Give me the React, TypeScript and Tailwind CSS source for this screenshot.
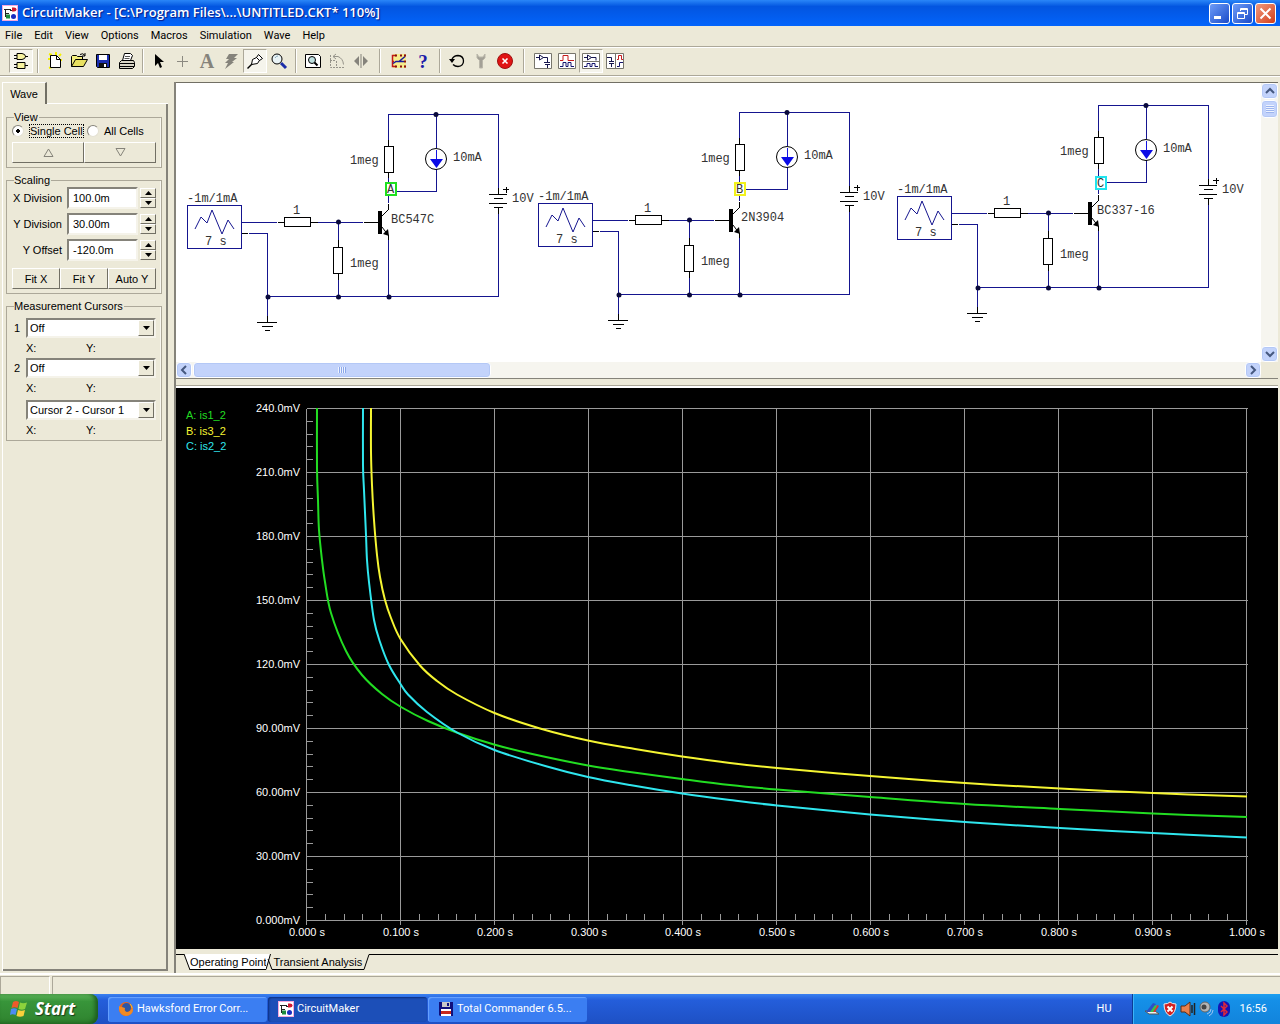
import { useState } from 'react';
import type { ReactNode } from 'react';

const MENUS = ['File', 'Edit', 'View', 'Options', 'Macros', 'Simulation', 'Wave', 'Help'];

const RAISED = 'bg-[#ece9d8] border border-t-white border-l-white border-r-[#716f64] border-b-[#716f64]';
const SUNKEN = 'bg-white border-2 border-t-[#85837a] border-l-[#85837a] border-r-[#f5f3ea] border-b-[#f5f3ea]';
const SCROLL_BTN = 'flex items-center justify-center bg-[#c3d3fb] border border-white rounded-sm shadow-[inset_0_0_0_1px_#b4c8f6]';

/* ── Toolbar icons ── */

function Icon({ children }: { children: ReactNode }) {
  return (
    <svg width="20" height="20" viewBox="0 0 20 20" fill="none" stroke="#000" aria-hidden="true" className="block">
      {children}
    </svg>
  );
}

const GatesIcon = (
  <Icon>
    <path d="M6 2.500h5q3.500.5 3.500 3t-3.500 3H6zM6 11.500h8v6H6z" fill="#f7f3a0" />
    <path d="M3 4.500h3M3 7.500h3M14 5.500h3M3 13.500h3M3 16.500h3M14 14.500h3" />
  </Icon>
);
const NewIcon = (
  <Icon>
    <path d="M4 3l3 1M3 8h3M4 17l3-1M16 3l-2 2M17 9h-2M11 1v3" stroke="#f5f000" strokeWidth="2" />
    <path d="M5.500 4.500h6l4 4v8h-10z" fill="#fff" />
    <path d="M11.500 4.500v4h4" />
  </Icon>
);
const OpenIcon = (
  <Icon>
    <path d="M2.500 15.500v-10l1-1h4l1 1h5v3" fill="#f3ee7c" />
    <path d="M2.500 15.500l4-7h12l-4 7z" fill="#e8e060" />
    <path d="M11 3.500q3-2 5 1M16 2v3h-3" />
  </Icon>
);
const SaveIcon = (
  <Icon>
    <path d="M3.500 3.500h13v13h-12l-1-1z" fill="#1c2fb0" />
    <path d="M6 4h8v5H6z" fill="#fff" stroke="none" />
    <path d="M6 12h8v4H6z" fill="#111" stroke="none" />
    <path d="M11 13h2v3h-2z" fill="#fff" stroke="none" />
  </Icon>
);
const PrintIcon = (
  <Icon>
    <path d="M5.500 9.500l2-7h6l2 2-2 5z" fill="#fff" />
    <path d="M8 5.500h5M7.500 7.500h5" stroke="#555" />
    <path d="M2.500 11.500l2-2h12l1 2v4l-2 2h-13z" fill="#d8d5c6" />
    <path d="M3 12.500h14M3 15.500h14" />
  </Icon>
);
const ArrowIcon = (
  <Icon>
    <path d="M6 3v12l3-3 2 5 2-1-2-5h4z" fill="#000" stroke="none" />
  </Icon>
);
const PlusIcon = (
  <Icon>
    <path d="M9.500 5v11M4 10.500h11" stroke="#8b8980" />
  </Icon>
);
const TextIcon = (
  <Icon>
    <text x="10" y="17" textAnchor="middle" fill="#85837b" stroke="none" className="font-['Liberation_Serif',serif] text-[20px] font-bold">A</text>
  </Icon>
);
const BoltIcon = (
  <Icon>
    <path d="M8 3h9l-4 4h3l-5 4h2l-9 7 3-6H4l4-4H5z" fill="#85837b" stroke="none" />
  </Icon>
);
const ProbeIcon = (
  <Icon>
    <path d="M2.500 17.500l5-5" strokeWidth="1.500" />
    <path d="M6.500 13.500l1-5 5-2.500 2.500 2.500-2.500 4z" fill="#fff" />
    <path d="M11.500 6.500l2-3 4 4-3 2z" fill="#fff" />
  </Icon>
);
const ZoomIcon = (
  <Icon>
    <circle cx="8" cy="8" r="5" fill="#e9f3f5" />
    <path d="M12 12l5 5" stroke="#1b2da8" strokeWidth="3" />
    <path d="M6 7q1-2 3-2" stroke="#8ab" />
  </Icon>
);
const FitIcon = (
  <Icon>
    <path d="M2.500 3.500h13l2 2v11h-15z" fill="#fff" />
    <circle cx="9" cy="9" r="3.500" fill="#bfe0e0" />
    <path d="M11.500 11.500l3 3" strokeWidth="2" />
  </Icon>
);
const RotateIcon = (
  <Icon>
    <g stroke="#96948a">
      <path d="M3.500 4v12.500H17M3 9.500h6M9.500 10v6" strokeDasharray="2 1" />
      <path d="M6 5.500h5q5 2 5.500 8M9 3L6 5.500 9 8" />
    </g>
  </Icon>
);
const MirrorIcon = (
  <Icon>
    <path d="M8 5v10l-5-5zM12 5v10l5-5z" fill="#85837b" stroke="none" />
    <path d="M10 3v14" stroke="#85837b" />
  </Icon>
);
const WiresIcon = (
  <Icon>
    <path d="M4 3h13v14H4z" fill="#f6ec8c" stroke="none" />
    <path d="M7 4.500H3.500v6H5M3.500 10v5.500H7M15 4.500h2M15 15.500h2" stroke="#c01818" strokeWidth="1.500" />
    <path d="M4 12.500l3-2h3l6-5M10 10.500h5" stroke="#1a1a9c" strokeWidth="1.500" />
    <path d="M7 3.500v2M12 3.500v2M16 3.500v2M7 14.500v2M12 14.500v2M16 14.500v2M16 9.500v2" stroke="#8a1010" strokeWidth="2" />
  </Icon>
);
const HelpIcon = (
  <Icon>
    <text x="10" y="17" textAnchor="middle" fill="#1c1ca8" stroke="none" className="font-['Liberation_Serif',serif] text-[19px] font-bold">?</text>
  </Icon>
);
const ResetIcon = (
  <Icon>
    <path d="M5 8q2-3.500 6-3.500 5.500.5 5.500 5.500t-5.500 5.500q-3 0-5-2" strokeWidth="1.300" />
    <path d="M2 8h6l-3 4z" fill="#000" stroke="none" />
  </Icon>
);
const WrenchIcon = (
  <Icon>
    <path d="M6 3v4l2.500 2.500V17h3V9.500L14 7V3l-2 3H8z" fill="#a3a096" stroke="#bab7aa" />
  </Icon>
);
const StopIcon = (
  <Icon>
    <circle cx="10" cy="10" r="7.500" fill="#e01414" stroke="#9e1010" />
    <path d="M7.500 7.500l5 5M12.500 7.500l-5 5" stroke="#fff" strokeWidth="1.600" />
  </Icon>
);
const SchematicViewIcon = (
  <Icon>
    <path d="M1.500 2.500h17v15h-17z" fill="#fff" stroke="#77756c" />
    <path d="M3 6.500h3M6.500 4v5l4-2.500zM10 6.500h4.500v5M11 11.500h6M12 13.500h5M14.500 14v3" stroke="#15154d" />
  </Icon>
);
const WaveViewIcon = (
  <Icon>
    <path d="M1.500 2.500h17v15h-17z" fill="#fff" stroke="#77756c" />
    <path d="M3 9.500h3v-5h5v5h6" stroke="#c81c1c" />
    <path d="M3 15.500h3v-4h3v4h2v-4h3v4h3" stroke="#15156d" />
  </Icon>
);
const SplitHIcon = (
  <Icon>
    <path d="M1.500 2.500h17v15h-17zM2 10.500h16" fill="#fff" stroke="#77756c" />
    <path d="M3 6.500h3M6.500 4v5l4-2.500zM10 6.500h5v3" stroke="#15154d" />
    <path d="M3 15.500h3v-3h3v3h2v-3h3v3h3" stroke="#15156d" />
  </Icon>
);
const SplitVIcon = (
  <Icon>
    <path d="M1.500 2.500h17v15h-17zM10.500 3v14" fill="#fff" stroke="#77756c" />
    <path d="M2 6.500h4.500v4M4 10.500h5M4 12.500h5M6.500 13v3" stroke="#15154d" />
    <path d="M12 8.500h1.500v-4h3v4H18" stroke="#c81c1c" />
    <path d="M12 15.500h2.500v-4H18" stroke="#15156d" />
  </Icon>
);

type Tool = { label: string; icon: ReactNode; pressed?: boolean };

const TOOL_GROUPS: Tool[][] = [
  [{ label: 'Parts', icon: GatesIcon, pressed: true }],
  [
    { label: 'New', icon: NewIcon },
    { label: 'Open', icon: OpenIcon },
    { label: 'Save', icon: SaveIcon },
    { label: 'Print', icon: PrintIcon },
  ],
  [
    { label: 'Arrow', icon: ArrowIcon },
    { label: 'Wire', icon: PlusIcon },
    { label: 'Text', icon: TextIcon },
    { label: 'Delete', icon: BoltIcon },
    { label: 'Probe', icon: ProbeIcon, pressed: true },
    { label: 'Zoom', icon: ZoomIcon },
  ],
  [
    { label: 'Fit to window', icon: FitIcon },
    { label: 'Rotate', icon: RotateIcon },
    { label: 'Mirror', icon: MirrorIcon },
  ],
  [
    { label: 'Digital mode', icon: WiresIcon },
    { label: 'Help', icon: HelpIcon },
  ],
  [
    { label: 'Reset', icon: ResetIcon },
    { label: 'Setup', icon: WrenchIcon },
    { label: 'Stop', icon: StopIcon },
  ],
  [
    { label: 'Schematic only', icon: SchematicViewIcon },
    { label: 'Waveforms only', icon: WaveViewIcon },
    { label: 'Split horizontally', icon: SplitHIcon, pressed: true },
    { label: 'Split vertically', icon: SplitVIcon },
  ],
];

// separator width in front of each group
const SEPARATORS = ['', 'w-[10px]', 'w-2', 'w-[10px]', 'w-[14px]', 'w-[10px]', 'w-[14px]'];

function AppIcon() {
  return (
    <svg width="16" height="16" viewBox="0 0 16 16" aria-hidden="true" className="block shrink-0">
      <rect width="16" height="16" fill="#fff" />
      <rect x="0.500" y="0.500" width="15" height="15" fill="none" stroke="#f4a8dc" />
      <path d="M2 4.500h7M3.500 4v8M3 8.500h4M8 5.500h3" stroke="#222" fill="none" />
      <path d="M10 2.500h2q2.500 0 2.500 2T12 6.500h-2z" fill="#d01830" />
      <path d="M4 9.500h4v4H4z" fill="#1d8a3c" />
      <circle cx="11.500" cy="11.500" r="2.500" fill="#1a2cc0" />
    </svg>
  );
}

function TitleBar() {
  return (
    <header className="h-[26px] flex items-center pl-[2px] pr-1 gap-1 bg-linear-to-b from-[#2a86f8] via-[#0355e0] via-25% to-[#0364fb]">
      <AppIcon />
      <h1 className="flex-1 text-white text-[13px] font-semibold whitespace-pre [text-shadow:1px_1px_1px_#0a1883] font-['Open_Sans',sans-serif]">
        {'CircuitMaker - [C:\\Program Files\\...\\UNTITLED.CKT* 110%]'}
      </h1>
      <div className="flex gap-[2px]">
        <button type="button" aria-label="Minimize" className="w-[21px] h-[21px] rounded-[3px] border border-white bg-linear-to-br from-[#6f9cf8] to-[#1b49c8]">
          <svg width="19" height="19" viewBox="0 0 19 19" aria-hidden="true"><path d="M4 12h7v3H4z" fill="#fff" /></svg>
        </button>
        <button type="button" aria-label="Restore" className="w-[21px] h-[21px] rounded-[3px] border border-white bg-linear-to-br from-[#6f9cf8] to-[#1b49c8]">
          <svg width="19" height="19" viewBox="0 0 19 19" fill="none" stroke="#fff" aria-hidden="true">
            <path d="M7.500 7V4.500h7v6H12M7 5.500h8M4.500 8.500h7v6h-7zM4 9.500h8" />
          </svg>
        </button>
        <button type="button" aria-label="Close" className="w-[21px] h-[21px] rounded-[3px] border border-white bg-linear-to-br from-[#f0997c] to-[#d23a12]">
          <svg width="19" height="19" viewBox="0 0 19 19" stroke="#fff" strokeWidth="2" aria-hidden="true">
            <path d="M4.500 4.500l10 10M14.500 4.500l-10 10" />
          </svg>
        </button>
      </div>
    </header>
  );
}

function Toolbar() {
  return (
    <div role="toolbar" className="h-[30px] flex items-center pl-[9px] border-t border-b border-t-[#aca899] border-b-[#aca899] shadow-[inset_0_1px_0_#fff,0_1px_0_#fff]">
      {TOOL_GROUPS.map((group, g) => (
        <div key={group[0].label} className="flex items-center">
          {g > 0 && (
            <div className={SEPARATORS[g] + ' h-6 flex justify-center'}>
              <span className="w-[2px] border-l border-[#aca899] bg-white" />
            </div>
          )}
          {group.map(tool => (
            <button
              key={tool.label}
              type="button"
              aria-label={tool.label}
              className={
                'w-6 h-6 flex items-center justify-center border ' +
                (tool.pressed
                  ? 'bg-[#f5f4ec] border-t-[#aca899] border-l-[#aca899] border-r-white border-b-white'
                  : 'border-transparent')
              }
            >
              {tool.icon}
            </button>
          ))}
        </div>
      ))}
    </div>
  );
}

/* ── Side panel ── */

function Group({ title, children }: { title: string; children: ReactNode }) {
  return (
    <fieldset className="border border-[#aca899] shadow-[inset_-1px_0_0_#f8f7f0] px-[5px] min-w-0">
      <legend className="ml-[2px] pr-px leading-3">{title}</legend>
      {children}
    </fieldset>
  );
}

function ScaleRow({ id, label, initial }: { id: string; label: string; initial: string }) {
  const [value, setValue] = useState(initial);
  return (
    <div className="flex items-center">
      <label htmlFor={id} className="w-[50px] text-right whitespace-nowrap">{label}</label>
      <input
        id={id}
        type="text"
        value={value}
        onChange={e => setValue(e.target.value)}
        className={SUNKEN + ' ml-[5px] flex-1 min-w-0 h-[22px] pl-1 outline-none'}
      />
      <span className="flex flex-col ml-[2px] w-4">
        <button type="button" aria-label={label + ' up'} className={RAISED + ' h-[10px] flex items-center justify-center'}>
          <svg width="7" height="4" viewBox="0 0 7 4" aria-hidden="true"><path d="M0 4h7L3.500 0z" /></svg>
        </button>
        <button type="button" aria-label={label + ' down'} className={RAISED + ' h-[10px] flex items-center justify-center'}>
          <svg width="7" height="4" viewBox="0 0 7 4" aria-hidden="true"><path d="M0 0h7L3.500 4z" /></svg>
        </button>
      </span>
    </div>
  );
}

function CursorSelect({ id, number, option }: { id: string; number?: string; option: string }) {
  return (
    <div>
      <div className="flex items-center">
        <label htmlFor={id} aria-label={number ? undefined : 'Difference'} className="w-[14px] pl-[2px]">{number}</label>
        <div className="relative flex-1">
          <select id={id} className={SUNKEN + ' w-full h-5 pl-[2px] pr-4 appearance-none outline-none block leading-4'}>
            <option>{option}</option>
          </select>
          <span className={RAISED + ' absolute right-[2px] top-[2px] w-4 h-4 flex items-center justify-center pointer-events-none'}>
            <svg width="7" height="4" viewBox="0 0 7 4" aria-hidden="true"><path d="M0 0h7L3.500 4z" /></svg>
          </span>
        </div>
      </div>
      <div className="flex h-5 items-center pl-[14px]">
        <span className="w-[60px]">X:</span>
        <span>Y:</span>
      </div>
    </div>
  );
}

function SidePanel() {
  const [cells, setCells] = useState('single');
  const radio = 'appearance-none w-3 h-3 rounded-full bg-white border border-[#85837a] border-r-[#e4e1d2] border-b-[#e4e1d2] checked:bg-[radial-gradient(#000_0_2px,#fff_2px)]';
  return (
    <aside className="w-[166px] ml-[2px] mb-[2px] shrink-0 flex flex-col text-[11px] leading-[14px] border-l border-l-white font-['Liberation_Sans',Arial,sans-serif]">
      <div className="flex h-[22px]">
        <button type="button" className="w-11 border-t border-t-white border-r-2 border-r-[#716f64]">Wave</button>
        <span className="flex-1 border-b border-b-white" />
      </div>
      <div className="flex-1 flex flex-col gap-[6px] pt-[7px] pl-[3px] pr-1 border-r-2 border-b-2 border-[#85837a]">
        <Group title="View">
          <div className="flex h-4 items-center">
            <label className="flex items-center gap-[5px] w-[75px] whitespace-nowrap">
              <input type="radio" name="cells" checked={cells === 'single'} onChange={() => setCells('single')} className={radio} />
              <span className="border border-dotted border-black leading-3">Single Cell</span>
            </label>
            <label className="flex items-center gap-[5px] whitespace-nowrap">
              <input type="radio" name="cells" checked={cells === 'all'} onChange={() => setCells('all')} className={radio} />
              <span>All Cells</span>
            </label>
          </div>
          <div className="flex mt-[3px] mb-1">
            <button type="button" aria-label="Previous" className={RAISED + ' flex-1 h-[21px] flex items-center justify-center'}>
              <svg width="11" height="9" viewBox="0 0 11 9" fill="none" stroke="#85837a" aria-hidden="true"><path d="M1 8.500h9L5.500 1z" /></svg>
            </button>
            <button type="button" aria-label="Next" className={RAISED + ' flex-1 h-[21px] flex items-center justify-center'}>
              <svg width="11" height="9" viewBox="0 0 11 9" fill="none" stroke="#85837a" aria-hidden="true"><path d="M1 .5h9L5.500 8z" /></svg>
            </button>
          </div>
        </Group>
        <Group title="Scaling">
          <div className="flex flex-col gap-1 pt-px">
            <ScaleRow id="xdiv" label="X Division" initial="100.0m" />
            <ScaleRow id="ydiv" label="Y Division" initial="30.00m" />
            <ScaleRow id="yoff" label="Y Offset" initial="-120.0m" />
          </div>
          <div className="flex mt-[7px] mb-1">
            {['Fit X', 'Fit Y', 'Auto Y'].map(name => (
              <button key={name} type="button" className={RAISED + ' flex-1 h-[21px]'}>{name}</button>
            ))}
          </div>
        </Group>
        <Group title="Measurement Cursors">
          <div className="pt-[6px]">
            <CursorSelect id="cursor1" number="1" option="Off" />
            <CursorSelect id="cursor2" number="2" option="Off" />
            <div className="pt-[2px]">
              <CursorSelect id="cursordiff" option="Cursor 2 - Cursor 1" />
            </div>
          </div>
        </Group>
      </div>
    </aside>
  );
}

/* ── Schematic ── */

type CircuitProps = {
  x: number;
  y: number;
  part: string;
  partX: number;
  probe: string;
  probeColor: string;
  probeX: number;
  probeY: number;
};

const CIRCUITS: CircuitProps[] = [
  { x: 0, y: 0, part: 'BC547C', partX: 391, probe: 'A', probeColor: '#1fe01f', probeX: 391, probeY: 189 },
  { x: 351, y: -2, part: '2N3904', partX: 390, probe: 'B', probeColor: '#f2f21c', probeX: 389, probeY: 191 },
  { x: 710, y: -9, part: 'BC337-16', partX: 387, probe: 'C', probeColor: '#1fe4ee', probeX: 391, probeY: 192 },
];

function Circuit({ x, y, part, partX, probe, probeColor, probeX, probeY }: CircuitProps) {
  return (
    <g transform={`translate(${x} ${y})`}>
      <g fill="none" stroke="#15158f" shapeRendering="crispEdges">
        <path d="M187.500 205.500h54v43h-54z" />
        <path d="M388.500 140V114.500h110V190M436.500 114v34M436.500 169v22.500H389M388.500 178v25" />
        <path d="M242 222.500h35M318 222.500h45M338.500 222v18M338.500 280v17" />
        <path d="M249 233.500h18.500V316M267 296.500h231.500V213M388.500 240v57" />
      </g>
      <path d="M195 229l6-12 6 6 5-13 10 24 6-14 6 9" fill="none" stroke="#15158f" />
      <g fill="none" stroke="#000" shapeRendering="crispEdges">
        <path d="M242 233.500h6M278 222.500h6M311 222.500h7M364 222.500h15M338.500 240v7M338.500 273v7" />
        <path d="M284.500 217.500h26v9h-26zM333.500 247.500h9v26h-9zM384.500 146.500h9v26h-9z" />
        <path d="M388.500 140v6M388.500 172v6M388.500 204v5M388.500 235v5M267.500 316v6" />
        <path d="M489 194.500h18M494 198.500h9M489 203.500h18M494 207.500h9M498.500 188v6M498.500 208v6" />
        <path d="M503 189.500h6M506.500 187v6" />
        <path d="M257 322.500h20M262 326.500h11M265 330.500h5" />
      </g>
      <path d="M378 211h4v23h-4z" />
      <path d="M382 216l7-7M382 227l6 8" stroke="#000" fill="none" />
      <path d="M383 234l6 2-1-7z" />
      <circle cx="436" cy="159" r="10.500" fill="none" stroke="#000" />
      <path d="M436.500 150v10" stroke="#1414e0" />
      <path d="M430 159h13l-6.500 9z" fill="#0a0ae6" />
      <g fill="#0a0a3c">
        <circle cx="436" cy="114.500" r="2.500" />
        <circle cx="338.500" cy="222" r="2.500" />
        <circle cx="268" cy="297" r="2.500" />
        <circle cx="338.500" cy="297" r="2.500" />
        <circle cx="389" cy="297" r="2.500" />
      </g>
      <rect x={probeX - 5} y={probeY - 6} width="10" height="12" fill="#fff" stroke={probeColor} strokeWidth="2" />
      <g fill="#333" className="font-['Liberation_Mono','Courier_New',monospace] text-[12px]">
        <text x={probeX - 4} y={probeY + 4}>{probe}</text>
        <text x="187" y="202">-1m/1mA</text>
        <text x="205" y="245">7 s</text>
        <text x="293" y="214">1</text>
        <text x="350" y="164">1meg</text>
        <text x="350" y="267">1meg</text>
        <text x="453" y="161">10mA</text>
        <text x="512" y="202">10V</text>
        <text x={partX} y="223">{part}</text>
      </g>
    </g>
  );
}

function Chevron({ d }: { d: string }) {
  return (
    <svg width="10" height="10" viewBox="0 0 10 10" fill="none" stroke="#45587f" strokeWidth="2" aria-hidden="true">
      <path d={d} />
    </svg>
  );
}

function SchematicPane() {
  return (
    <section aria-label="Schematic" className="bg-white border-t border-t-[#716f64]">
      <div className="flex">
        <svg viewBox="176 83 1085 279" className="block flex-1 min-w-0">
          {CIRCUITS.map(c => <Circuit key={c.probe} {...c} />)}
        </svg>
        <div className="w-[17px] flex flex-col bg-[#f6f5ef]">
          <button type="button" aria-label="Scroll up" className={SCROLL_BTN + ' h-4'}><Chevron d="M1 7l4-4 4 4" /></button>
          <div className={SCROLL_BTN + ' h-[18px] mt-px'}>
            <span className="w-2 h-2 bg-[repeating-linear-gradient(#eef3ff_0_1px,#9cb4ee_1px_2px)]" />
          </div>
          <span className="flex-1" />
          <button type="button" aria-label="Scroll down" className={SCROLL_BTN + ' h-4'}><Chevron d="M1 3l4 4 4-4" /></button>
        </div>
      </div>
      <div className="flex h-4 bg-[#f6f5ef]">
        <button type="button" aria-label="Scroll left" className={SCROLL_BTN + ' w-4'}><Chevron d="M7 1L3 5l4 4" /></button>
        <div className={SCROLL_BTN + ' w-[27%] ml-px'}>
          <span className="w-2 h-[6px] bg-[repeating-linear-gradient(90deg,#eef3ff_0_1px,#8ca8ea_1px_2px)]" />
        </div>
        <span className="flex-1" />
        <button type="button" aria-label="Scroll right" className={SCROLL_BTN + ' w-4'}><Chevron d="M3 1l4 4-4 4" /></button>
        <span className="w-[17px] bg-[#ece9d8]" />
      </div>
    </section>
  );
}

/* ── Waveform plot ── */

const LEFT = 306.5;
const TOP = 408.5;
const BOTTOM = 920.5;
const X_LABELS = ['0.000 s', '0.100 s', '0.200 s', '0.300 s', '0.400 s', '0.500 s', '0.600 s', '0.700 s', '0.800 s', '0.900 s', '1.000 s'];
const Y_LABELS = ['240.0mV', '210.0mV', '180.0mV', '150.0mV', '120.0mV', '90.00mV', '60.00mV', '30.00mV', '0.000mV'];

const TRACES = [
  {
    name: 'A: is1_2', color: '#22dd22', labelY: 419,
    points: '317,408 317,468 318,500 319,530 322,560 325,582 331,613 346,651 362,675 382,694 401,707 428,721 458,733 494,744.5 530,753.5 588,765.5 630,772 682,779 730,785 777,789.5 870,797 965,804 1060,809 1153,813.5 1247,817',
  },
  {
    name: 'B: is3_2', color: '#f5f532', labelY: 435,
    points: '371,408 371,452 372,485 374,520 377,555 380,577 385,600 391,618 400.5,639 420,665.5 437,681 457,694.5 494.5,713 540,728.500 588,740.5 635,749 682,756.5 730,763 777,768 870,776 965,783 1060,788.5 1153,793 1247,796.5',
  },
  {
    name: 'C: is2_2', color: '#2fe6ee', labelY: 450,
    points: '363,408 363,465 364,490 366,535 367,560 369,582 374,620 380,642 389,665 400.5,684 408,694.5 427,712 457,732.5 494.5,750 547,766.5 588,777 630,785 682,793.5 730,800 777,805.5 870,814.5 965,822 1060,828 1153,833 1247,837.5',
  },
];

// Catmull-Rom through the samples, written as cubic segments
function smoothPath(points: string) {
  const p = points.split(' ').map(s => s.split(',').map(Number));
  let d = `M${p[0][0]} ${p[0][1]}`;
  for (let i = 0; i < p.length - 1; i++) {
    const a = p[i - 1] ?? p[i];
    const b = p[i];
    const c = p[i + 1];
    const e = p[i + 2] ?? c;
    d += `C${b[0] + (c[0] - a[0]) / 6} ${b[1] + (c[1] - a[1]) / 6} ${c[0] - (e[0] - b[0]) / 6} ${c[1] - (e[1] - b[1]) / 6} ${c[0]} ${c[1]}`;
  }
  return d;
}

function WavePlot() {
  return (
    <section aria-label="Waveforms" className="bg-black">
      <svg viewBox="176 388 1102 561" className="block w-full font-['Liberation_Sans',Arial,sans-serif] text-[11px]">
        <g stroke="#9a9a9a" shapeRendering="crispEdges">
          {X_LABELS.map((label, i) => (
            <line key={label} x1={LEFT + i * 94} x2={LEFT + i * 94} y1={TOP} y2={BOTTOM + 4} />
          ))}
          {Y_LABELS.map((label, i) => (
            <line key={label} x1={LEFT} x2={LEFT + 941} y1={TOP + i * 64} y2={TOP + i * 64} />
          ))}
          {Array.from({ length: 50 }, (_, i) => (
            <line key={i} x1={LEFT + i * 18.8} x2={LEFT + i * 18.8} y1={BOTTOM - 7} y2={BOTTOM} />
          ))}
          {Array.from({ length: 40 }, (_, i) => (
            <line key={i} x1={LEFT} x2={LEFT + 6} y1={TOP + i * 12.8} y2={TOP + i * 12.8} />
          ))}
        </g>
        {TRACES.map(t => (
          <path key={t.name} d={smoothPath(t.points)} fill="none" stroke={t.color} strokeWidth="2" />
        ))}
        {TRACES.map(t => <text key={t.name} x="186" y={t.labelY} fill={t.color}>{t.name}</text>)}
        <g fill="#fff">
          {Y_LABELS.map((label, i) => <text key={label} x="300" y={412 + i * 64} textAnchor="end">{label}</text>)}
          {X_LABELS.map((label, i) => <text key={label} x={307 + i * 94} y="936" textAnchor="middle">{label}</text>)}
        </g>
      </svg>
    </section>
  );
}

function AnalysisTabs() {
  return (
    <div className="flex mt-[5px] h-4 text-[11px] leading-[14px] font-['Liberation_Sans',Arial,sans-serif]">
      <span className="w-2 border-t border-black" />
      <svg width="6" height="16" viewBox="0 0 6 16" aria-hidden="true"><path d="M0 .5h1L6 15.500V0z" fill="#fff" /><path d="M0 0l6 16" stroke="#000" /></svg>
      <button type="button" className="bg-white border-b border-black whitespace-nowrap">Operating Point</button>
      <svg width="7" height="16" viewBox="0 0 7 16" aria-hidden="true">
        <path d="M0 0h4L0 15z" fill="#fff" />
        <path d="M4.500 0L0 15.500M2 5l4 10.500h1" stroke="#000" fill="none" />
      </svg>
      <button type="button" className="border-b border-black whitespace-nowrap">Transient Analysis</button>
      <svg width="8" height="16" viewBox="0 0 8 16" aria-hidden="true"><path d="M0 15.500h2L7 .5h1" stroke="#000" fill="none" /></svg>
      <span className="flex-1 border-t border-black" />
    </div>
  );
}

/* ── Taskbar ── */

function TaskButton({ label, active, children }: { label: string; active?: boolean; children: ReactNode }) {
  return (
    <button
      type="button"
      className={
        'w-[159px] h-[25px] pl-[10px] flex items-center gap-[3px] rounded-[3px] text-left whitespace-nowrap ' +
        (active ? 'bg-[#1c4fb8] shadow-[inset_1px_1px_2px_#0c2f80]' : 'bg-[#3b7ef2] shadow-[inset_1px_1px_1px_#6aa4ff]')
      }
    >
      {children}
      <span>{label}</span>
    </button>
  );
}

function Taskbar() {
  return (
    <footer className="h-[30px] flex text-white text-[11px] font-['Roboto',Tahoma,sans-serif] bg-linear-to-b from-[#3a80f0] via-[#245edb] via-20% to-[#1e50c4]">
      <button
        type="button"
        className="w-[98px] pl-[10px] flex items-center gap-[7px] rounded-r-lg bg-linear-to-b from-[#5eb55c] via-[#38953a] via-25% to-[#2f832f] shadow-[inset_-3px_-1px_4px_#1d5c1d] text-[17px] font-bold italic font-['Open_Sans',sans-serif] [text-shadow:1px_1px_1px_#1a3a1a]"
      >
        <svg width="18" height="18" viewBox="0 0 18 18" aria-hidden="true">
          <path d="M3 2q3-2 6 0L7.500 8q-3-1.500-6 0z" fill="#ee5a2c" />
          <path d="M10 2.500q3 1.500 7 0L15 9q-3 1.500-6.500 0z" fill="#8cd23c" />
          <path d="M1 9q3-1.500 6 0l-1.500 6q-3-1.500-5.500 0z" fill="#4c8cf4" />
          <path d="M8 10q3.500 1.500 7 0l-1.500 6q-3.500 1.500-7 0z" fill="#fad03c" />
        </svg>
        Start
      </button>
      <div className="flex-1 flex items-center gap-px pl-[10px]">
        <TaskButton label="Hawksford Error Corr...">
          <svg width="16" height="16" viewBox="0 0 16 16" aria-hidden="true">
            <circle cx="8" cy="8" r="7" fill="#e8641c" />
            <circle cx="8.500" cy="6.500" r="4.500" fill="#2b56a8" />
            <path d="M1 5q1 1 3 1l3 1q-1 3 2 4 4 0 5-5l1 2q0 6-7 7-6-1-7-7z" fill="#f08a24" />
            <path d="M12 3q2 2 2 4" stroke="#f8c030" fill="none" />
          </svg>
        </TaskButton>
        <TaskButton label="CircuitMaker" active>
          <AppIcon />
        </TaskButton>
        <TaskButton label="Total Commander 6.5...">
          <svg width="16" height="16" viewBox="0 0 16 16" aria-hidden="true">
            <path d="M1 1h14v14H2l-1-1z" fill="#10107c" />
            <path d="M4 1h8v5H4z" fill="#c8c8c8" /><path d="M9 2h2v3H9z" fill="#10107c" />
            <path d="M3 8h10v7H3z" fill="#fff" /><path d="M3 10h10v3H3z" fill="#c8281c" />
          </svg>
        </TaskButton>
      </div>
      <span className="self-center pr-5">HU</span>
      <div className="flex items-center gap-[2px] pl-[11px] pr-[13px] border-l border-l-[#0c3c94] shadow-[inset_1px_0_0_#3cb4f8] bg-linear-to-b from-[#1ca0f0] via-[#1590e8] via-20% to-[#1284dc]">
        <svg width="16" height="16" viewBox="0 0 16 16" aria-hidden="true">
          <path d="M1 10h10l4 3H5z" fill="#f2f2f2" stroke="#555" />
          <path d="M2 11l7-9 3 1-5 8z" fill="#2c50c8" /><path d="M8 11l5-7 2 1-4 6z" fill="#e03030" /><path d="M6 11l5-7 2 1-4 6z" fill="#3cc04c" />
        </svg>
        <svg width="16" height="16" viewBox="0 0 16 16" aria-hidden="true">
          <path d="M2 3q4 0 6-2 2 2 6 2 0 9-6 12Q2 12 2 3z" fill="#d42020" stroke="#eee" />
          <path d="M5.500 5.500l5 5M10.500 5.500l-5 5" stroke="#fff" strokeWidth="2" />
        </svg>
        <svg width="16" height="16" viewBox="0 0 16 16" aria-hidden="true">
          <path d="M1 5h4l5-4v14l-5-4H1z" fill="#e8804c" stroke="#5c2c14" />
          <path d="M12 4v8M14.500 2v12" stroke="#222" strokeWidth="1.500" />
        </svg>
        <svg width="16" height="16" viewBox="0 0 16 16" aria-hidden="true">
          <circle cx="7" cy="6" r="5" fill="#b4b4b4" stroke="#666" /><circle cx="6" cy="6" r="2.500" fill="#444" />
          <path d="M9 13q4-1 4-5M11 15q4-2 4-6" stroke="#9cc4f4" fill="none" />
        </svg>
        <svg width="16" height="16" viewBox="0 0 16 16" aria-hidden="true">
          <rect x="2" y="0" width="12" height="16" rx="6" fill="#1414b4" />
          <path d="M5 5l6 6-3 3V2l3 3-6 6" stroke="#e02838" strokeWidth="1.500" fill="none" />
        </svg>
        <time className="pl-[6px]">16:56</time>
      </div>
    </footer>
  );
}

export default function App() {
  return (
    <div className="min-h-screen flex flex-col bg-[#ece9d8] text-black">
      <TitleBar />
      <nav className="h-5 flex items-center pl-[5px] gap-3 text-[11px] leading-4 font-['Roboto',Tahoma,sans-serif]">
        {MENUS.map(name => <button key={name} type="button">{name}</button>)}
      </nav>
      <Toolbar />

      <main className="flex-1 flex pt-[6px] border-b-2 border-b-white">
        <SidePanel />
        <div className="flex-1 min-w-0 ml-[6px] mr-[2px] border-l-2 border-l-[#85837a]">
          <SchematicPane />
          <div className="h-[10px] border-t border-t-[#85837a] flex flex-col justify-end">
            <span className="h-[3px] border-t border-t-[#aca899] bg-white" />
          </div>
          <WavePlot />
          <AnalysisTabs />
        </div>
      </main>

      <div role="status" className="h-[19px] flex gap-[2px] pt-px">
        <span className="w-[50px] border-t border-l border-[#aca899] border-r border-r-white" />
        <span className="flex-1 border-t border-l border-[#aca899]" />
      </div>
      <Taskbar />
    </div>
  );
}
